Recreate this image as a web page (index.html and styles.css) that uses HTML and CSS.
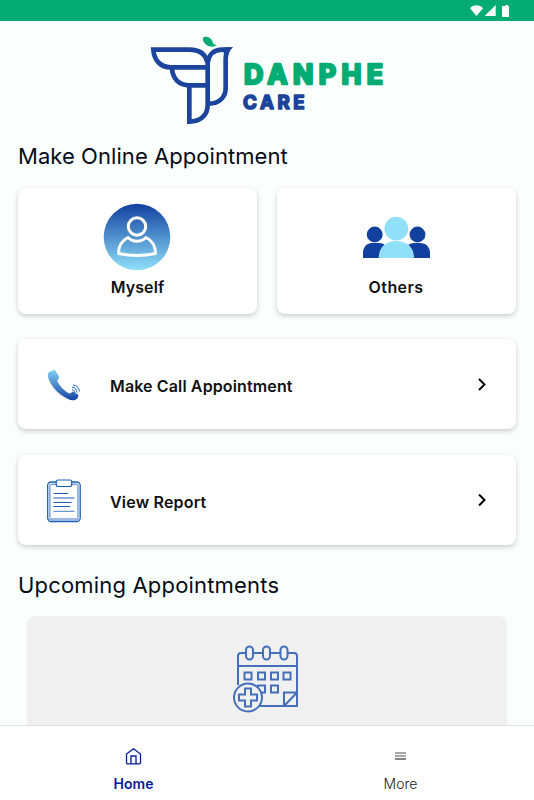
FILE: index.html
```
<!DOCTYPE html>
<html lang="en">
  <head>
    <meta charset="UTF-8" />
    <meta name="viewport" content="width=device-width, initial-scale=1.0" />
    <title>Danphe Care</title>
    <link rel="stylesheet" href="styles.css" />
  </head>
  <body>
    <div class="status-bar">
      <svg width="40" height="13" viewBox="0 0 40 13" fill="#fff">
        <path d="M0 3.200C3.500 -.6 9.500 -.6 13 3.200L6.500 11z" />
        <path d="M25.700 0V11H14.700z" />
        <path d="M34 1h1.500V0h2.500v1H39V12H32V1z" />
      </svg>
    </div>

    <main class="content">
      <svg class="logo" viewBox="30 33 705 270">
        <g fill="none" stroke="#1c449c" stroke-width="14">
          <path d="M202 112C196 86 178 74 148 74H40C42 106 62 127 92 127H202" />
          <path d="M96 130C98 160 116 181 148 181H202" />
          <path d="M148 181V290C180 290 203 272 203 240V112C207 86 224 74 246 74H264C259 82 257 92 257 105V190C257 217 237 236 207 236" />
        </g>
        <path d="M255 67H280C270 73 264 83 264 95L250 84z" fill="#1c449c" />
        <path d="M190 37C199 32 214 38 217 49C219 57 224 60 231 61C220 68 205 66 196 57C189 50 187 43 190 37z" fill="#04ac74" />
        <text class="logo-name" x="312" y="178" textLength="417">DANPHE</text>
        <text class="logo-sub" x="309" y="253" textLength="185">CARE</text>
      </svg>

      <h2 class="section-title title-make">Make Online Appointment</h2>

      <div class="card-row">
        <div class="card person-card">
          <svg width="69" height="68" viewBox="0 0 69 68">
            <defs>
              <linearGradient id="blue" x1="0" y1="0" x2="0" y2="1">
                <stop offset="0" stop-color="#12409f" />
                <stop offset="1" stop-color="#8fe0fa" />
              </linearGradient>
            </defs>
            <circle cx="34" cy="34" r="33.300" fill="url(#blue)" />
            <g fill="none" stroke="#fff" stroke-width="3" stroke-linejoin="round">
              <circle cx="34" cy="23.500" r="8.700" />
              <path d="M25 34.500C18 38 15.500 44 15.500 50.500C27 53 41 53 52.500 50.500C52.500 44 50 38 43 34.500C38 39.500 30 39.500 25 34.500z" />
            </g>
          </svg>
          <span class="card-label label-myself">Myself</span>
        </div>
        <div class="card person-card">
          <svg width="70" height="68" viewBox="0 -1 70 68">
            <g fill="#12409f">
              <circle cx="12.700" cy="30.500" r="7.900" />
              <circle cx="55.500" cy="30.500" r="7.900" />
              <path d="M1 54V49C1 43 5 39 10 39H17C23 39 25 43 25 49V54zM43 54V49C43 43 47 39 52 39H58C64 39 68 43 68 49V54z" />
            </g>
            <circle cx="34.300" cy="24.700" r="11.900" fill="#90e0fa" />
            <path d="M16.700 54C16.700 43 24 37 34.300 37S52 43 52 54z" fill="#90e0fa" />
          </svg>
          <span class="card-label label-others">Others</span>
        </div>
      </div>

      <div class="card action-card">
        <svg class="action-icon" width="36" height="44" viewBox="0 0 36 44">
          <defs>
            <linearGradient id="phone" x1="0" y1="0" x2="0" y2="1">
              <stop offset="0" stop-color="#82d0f2" />
              <stop offset="1" stop-color="#1444a4" />
            </linearGradient>
          </defs>
          <path d="M3 9L7 7.200Q8.700 6.700 9.700 8.200L13.200 13.800Q13.500 15.200 12 16.200Q10.700 17.500 11.700 19C14.500 24 18 27.500 22.500 30.200Q24 31 25.500 29.500L26.500 28.500L32 31.500Q32.700 32.700 32 34.500C29.500 38 26 38 22 36C12 31.500 4 22 2 14Q1.200 10.500 3 9z" fill="url(#phone)" />
          <path d="M26 26.500q2.500.2 3 3.500M26 24.200q4.500.2 5 5.500M27 22q5.500.2 6.500 6.500" fill="none" stroke="#2866b0" stroke-width="1" />
        </svg>
        <span class="action-label label-call">Make Call Appointment</span>
        <svg class="chevron" width="9" height="13" viewBox="0 0 9 13">
          <path d="M2 1L7.500 6.500L2 12" fill="none" stroke="#000" stroke-width="2" />
        </svg>
      </div>

      <div class="card action-card">
        <svg class="action-icon" width="36" height="44" viewBox="0 0 36 44" fill="none">
          <rect x="1.700" y="3" width="32.500" height="39.500" rx="3.500" stroke="#1a5eb8" stroke-width="1.300" />
          <rect x="3.900" y="5.200" width="28.100" height="34.800" rx="1.500" stroke="#3a78c6" />
          <path d="M3 41H33" stroke="#9cb4de" stroke-width="2" />
          <rect x="10.200" y="1" width="15.500" height="6.500" rx="2" fill="#fff" stroke="#1a5eb8" stroke-width="1.200" />
          <path d="M7.500 14.500H22M7.500 23.500H25.500M7.500 27.500H24" stroke="#1a5eb8" stroke-width="1.100" />
          <path d="M7.500 19H28.500M7.500 32.300H28.500" stroke="#6c94d0" stroke-width="1.300" />
        </svg>
        <span class="action-label label-report">View Report</span>
        <svg class="chevron" width="9" height="13" viewBox="0 0 9 13">
          <path d="M2 .5L7.500 6L2 11.500" fill="none" stroke="#000" stroke-width="2" />
        </svg>
      </div>

      <h2 class="section-title title-upcoming">Upcoming Appointments</h2>

      <div class="empty-box">
        <svg width="68" height="68" viewBox="0 0 68 68" fill="none" stroke="#446fb9" stroke-width="2">
          <path d="M5 40V11Q5 8 8 8H61Q64 8 64 11V61H26M5 21H64" />
          <g fill="#f0f0f0">
            <rect x="13" y="1.500" width="7" height="13" rx="3.500" />
            <rect x="30" y="1.500" width="7" height="13" rx="3.500" />
            <rect x="47.500" y="1.500" width="7" height="13" rx="3.500" />
          </g>
          <path d="M11.500 27.500h7v7h-7zM25 27.500h7v7h-7zM38 27.500h7v7h-7zM50.500 27.500h7v7h-7zM25 40.500h7v7h-7zM38 40.500h7v7h-7zM51 61V47.500H64M52 60L63 48.500" />
          <circle cx="15" cy="52.500" r="14" fill="#f0f0f0" />
          <path d="M12 43.500h6v6h6v6h-6v6h-6v-6h-6v-6h6z" />
        </svg>
      </div>
    </main>

    <nav class="tab-bar">
      <a class="tab active">
        <svg width="18" height="18" viewBox="0.500 -0.500 18 18" fill="none" stroke="currentColor" stroke-width="1.300">
          <path d="M2 6.500L9 1.200L16 6.500V15Q16 16.300 14.700 16.300H3.300Q2 16.300 2 15zM6.500 16V8.500H11.500V16" />
        </svg>
        <span class="label-home">Home</span>
      </a>
      <a class="tab">
        <svg width="18" height="18" viewBox="0.500 -0.500 18 18">
          <path d="M3.500 5.500H14.500M3.500 8.500H14.500" stroke="#8a8a8a" stroke-width="1.500" />
          <path d="M3.500 11.500H14.500" stroke="#333" stroke-width="1.200" />
        </svg>
        <span class="label-more">More</span>
      </a>
    </nav>
  </body>
</html>
```
FILE: styles.css
```
* {
  box-sizing: border-box;
}
body {
  margin: 0;
  height: 100vh;
  display: flex;
  flex-direction: column;
  overflow: hidden;
  background-color: #fafffe;
  color: #111;
  font-family: "Inter", sans-serif;
}
.status-bar {
  flex: none;
  height: 21px;
  padding: 5px 24px 0 0;
  display: flex;
  justify-content: flex-end;
  background-color: #04ac74;
}
.content {
  flex: 1;
  min-height: 0;
  overflow: hidden;
  padding: 15px 18px 0;
  display: flex;
  flex-direction: column;
}
.logo {
  flex: none;
  width: 235px;
  height: 90px;
  align-self: center;
}
.logo-name,
.logo-sub {
  font-weight: 700;
  stroke-linejoin: round;
}
.logo-name {
  font-size: 80px;
  fill: #04ac74;
  stroke: #04ac74;
  stroke-width: 8px;
}
.logo-sub {
  font-size: 56px;
  fill: #1c449c;
  stroke: #1c449c;
  stroke-width: 5px;
}
.section-title {
  flex: none;
  margin: 0;
  font-size: 22px;
  line-height: 30px;
  font-weight: 400;
  color: #060b18;
  white-space: nowrap;
}
.title-make {
  margin: 15px 0 17px;
  letter-spacing: 0.06px;
}
.title-upcoming {
  margin: -1px 0 16px;
  letter-spacing: 0.18px;
}
.card {
  flex: none;
  background-color: #fff;
  border-radius: 8px;
  box-shadow: 0 2px 5px rgba(0, 0, 0, 0.2);
}
.card-row {
  flex: none;
  display: grid;
  grid-template-columns: 1fr 1fr;
  gap: 20px;
  margin-bottom: 25px;
}
.person-card {
  height: 126px;
  padding-top: 15px;
  display: flex;
  flex-direction: column;
  align-items: center;
  gap: 6px;
}
.card-label,
.action-label {
  font-size: 16px;
  line-height: 20px;
  font-weight: 600;
  white-space: nowrap;
}
.label-myself {
  letter-spacing: 0.1px;
}
.label-others {
  margin-right: 1px;
  letter-spacing: 0.4px;
}
.action-card {
  height: 90px;
  padding: 0 30px 0 28px;
  margin-bottom: 26px;
  display: flex;
  align-items: center;
}
.action-icon {
  margin-top: 2px;
}
.action-label {
  margin: 3px 0 0 28px;
}
.label-call {
  letter-spacing: 0.13px;
}
.label-report {
  letter-spacing: 0.2px;
}
.chevron {
  margin-left: auto;
}
.empty-box {
  flex: none;
  height: 150px;
  margin: 0 9px;
  padding-top: 29px;
  display: flex;
  justify-content: center;
  align-items: flex-start;
  background-color: #f0f0f0;
  border-radius: 8px;
}
.tab-bar {
  flex: none;
  height: 75px;
  display: flex;
  background-color: #fff;
  border-top: 1px solid #e0e0e0;
}
.tab {
  flex: 1;
  padding-top: 21px;
  display: flex;
  flex-direction: column;
  align-items: center;
  gap: 9px;
  font-size: 14px;
  line-height: 20px;
  color: #222;
}
.tab.active {
  color: #061c9c;
  font-weight: 600;
}
.label-more {
  font-weight: 300;
}
```
